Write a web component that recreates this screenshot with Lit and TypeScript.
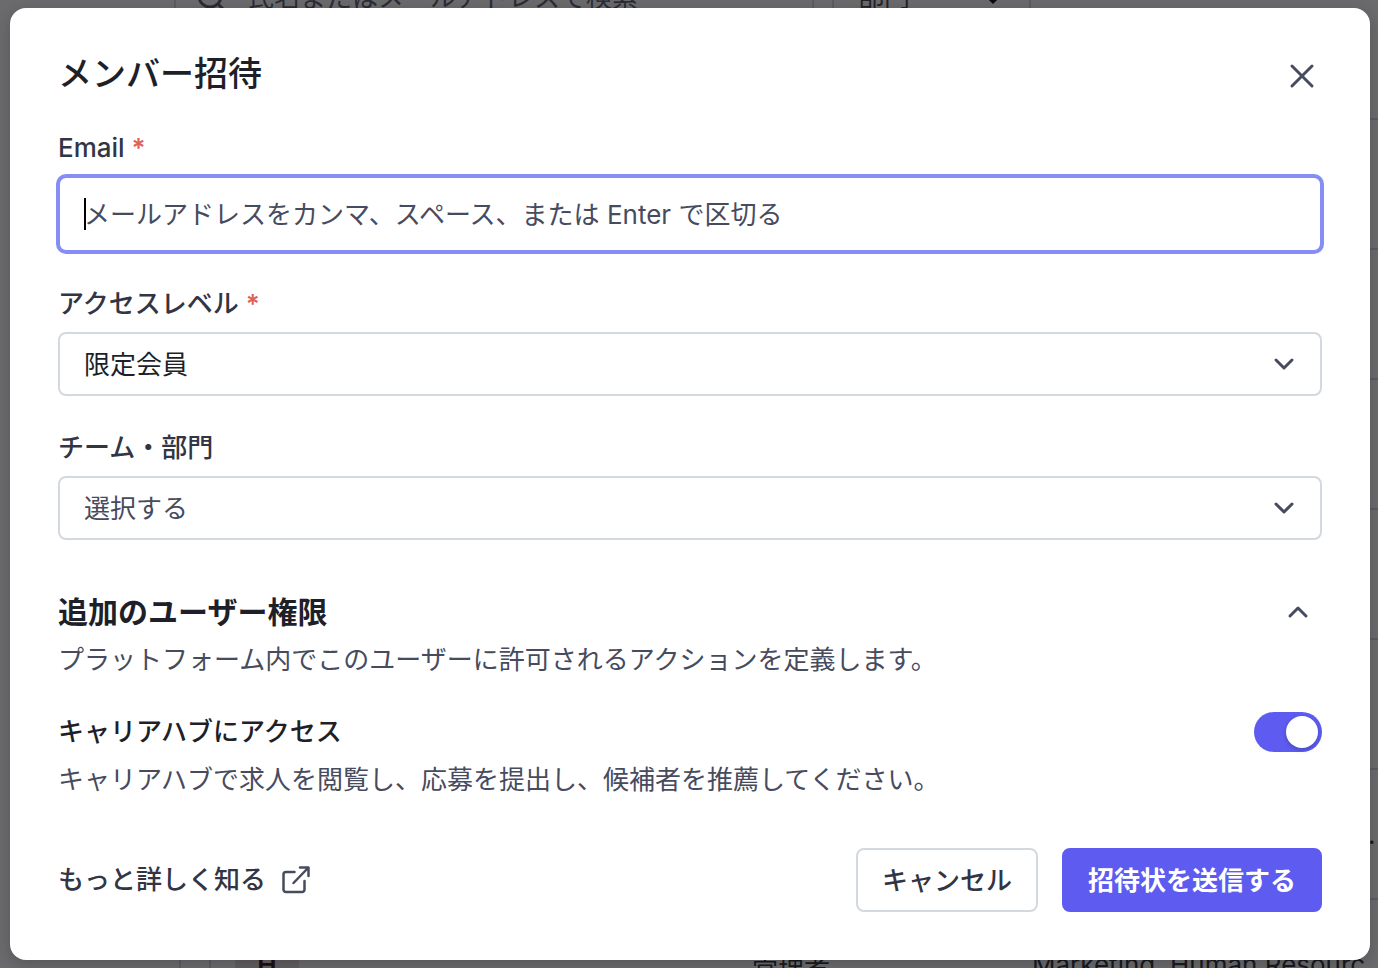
import { LitElement, html, css, svg } from "lit";
import { customElement, state } from "lit/decorators.js";

const chevronDown = svg`<path d="M4 8l8 8 8-8" />`;
const chevronUp = svg`<path d="M4 16l8-8 8 8" />`;

const rows = [
  { initial: "", role: "", department: "", more: "" },
  { initial: "", role: "", department: "", more: "" },
  { initial: "", role: "", department: "", more: "" },
  { initial: "", role: "", department: "", more: "" },
  { initial: "", role: "", department: "", more: "" },
  { initial: "", role: "", department: "", more: "" },
  { initial: "", role: "", department: "", more: "." },
  { initial: "H", role: "管理者", department: "Marketing, Human Resourc", more: "" },
];

@customElement("member-list")
class MemberList extends LitElement {
  static styles = css`
    :host {
      display: block;
      background: #fff;
      color: #5f6376;
    }
    .toolbar {
      display: flex;
      gap: 18px;
      margin-top: -34px;
      padding-left: 174px;
    }
    .box {
      box-sizing: border-box;
      display: flex;
      align-items: center;
      height: 64px;
      border: 2px solid #d9d9ec;
      border-radius: 8px;
      padding: 0 24px 0 20px;
      line-height: 40px;
    }
    .search {
      width: 640px;
      gap: 22px;
    }
    .filter {
      width: 199px;
      padding-left: 24px;
      justify-content: space-between;
      color: #4a4d5c;
    }
    svg {
      fill: none;
      stroke: currentColor;
      stroke-width: 3;
      stroke-linecap: round;
    }
    .chevron {
      color: #111;
    }
    table {
      width: 100%;
      margin-top: -40px;
      padding-left: 179px;
      border-spacing: 0;
      table-layout: fixed;
    }
    td {
      box-sizing: border-box;
      height: 130px;
      padding: 0;
      border-bottom: 2px solid #d9d9ec;
      white-space: nowrap;
      color: #34353f;
    }
    .edge {
      width: 32px;
    }
    tr:last-child .edge {
      border-left: 2px solid #d9d9ec;
      border-right: 2px solid #d9d9ec;
    }
    .person {
      width: 541px;
      padding-left: 24px;
    }
    .role {
      width: 280px;
    }
    .more {
      width: 10px;
    }
    .avatar {
      display: flex;
      align-items: center;
      justify-content: center;
      width: 64px;
      height: 64px;
      border-radius: 8px;
      background: #ecdcde;
      color: #40181e;
      font-weight: 600;
    }
  `;

  render() {
    return html`
      <div class="toolbar">
        <div class="box search">
          <svg width="30" height="30" viewBox="0 0 30 30">
            <circle cx="14" cy="13" r="11" />
            <path d="M22 21l5 5" />
          </svg>
          <span>氏名またはメールアドレスで検索</span>
        </div>
        <div class="box filter">
          <span>部門</span>
          <svg class="chevron" width="24" height="24" viewBox="0 0 24 24">${chevronDown}</svg>
        </div>
      </div>
      <table>
        ${rows.map(
          (row) => html`<tr>
            <td class="edge"></td>
            <td class="person">
              ${row.initial ? html`<div class="avatar">${row.initial}</div>` : ""}
            </td>
            <td class="role">${row.role}</td>
            <td>${row.department}</td>
            <td class="more">${row.more}</td>
          </tr>`
        )}
      </table>
    `;
  }
}

@customElement("invite-dialog")
class InviteDialog extends LitElement {
  @state() private hubAccess = true;

  static styles = css`
    :host {
      display: block;
    }
    .dialog {
      box-sizing: border-box;
      background: #fff;
      border-radius: 16px;
      padding: 40px 48px 48px;
      box-shadow: 0 4px 16px rgba(0, 0, 0, 0.2);
    }
    h2,
    h3,
    p {
      margin: 0;
    }
    button,
    input,
    select {
      box-sizing: border-box;
      margin: 0;
      font: inherit;
    }
    svg {
      display: block;
      fill: none;
      stroke: #474b5e;
      stroke-width: 3;
      stroke-linecap: round;
      stroke-linejoin: round;
    }
    .header,
    .section-header,
    .permission,
    .footer {
      display: flex;
      align-items: center;
      justify-content: space-between;
    }
    .header {
      height: 56px;
      padding-bottom: 24px;
    }
    h2 {
      align-self: flex-start;
      font-size: 34px;
      line-height: 52px;
      font-weight: 500;
      color: #1e1f29;
    }
    .icon-button {
      display: flex;
      align-items: center;
      justify-content: center;
      height: 40px;
      padding: 0;
      border: 0;
      background: none;
      cursor: pointer;
    }
    .close {
      width: 40px;
    }
    .collapse {
      width: 48px;
    }
    .field {
      display: flex;
      flex-direction: column;
      gap: 8px;
      margin-bottom: 32px;
    }
    label,
    .link {
      line-height: 40px;
      font-weight: 500;
      color: #323544;
    }
    .required {
      color: #e0605a;
      font-weight: 600;
    }
    .email {
      width: 100%;
      height: 76px;
      padding: 0 24px;
      border: 2px solid #868ef5;
      border-radius: 8px;
      outline: 0;
      box-shadow: 0 0 0 2px #868ef5;
      color: #1e1f29;
      caret-color: transparent;
      background: linear-gradient(#000, #000) 24px center / 2px 32px no-repeat #fff;
    }
    .email::placeholder {
      color: #474b5e;
      opacity: 1;
    }
    .select {
      display: grid;
      align-items: center;
    }
    .select > * {
      grid-area: 1 / 1;
    }
    .select svg {
      justify-self: end;
      margin-right: 26px;
      pointer-events: none;
    }
    select {
      appearance: none;
      width: 100%;
      height: 64px;
      padding: 0 64px 0 24px;
      border: 2px solid #d3d9de;
      border-radius: 8px;
      background: #fff;
      color: #1e1f29;
    }
    .unset {
      color: #474b5e;
    }
    .section-header {
      margin-top: 48px;
    }
    h3 {
      font-size: 30px;
      line-height: 48px;
      font-weight: 600;
      color: #1e1f29;
    }
    p {
      line-height: 48px;
      color: #474b5e;
    }
    .permission {
      margin-top: 24px;
    }
    .permission label {
      line-height: 48px;
      color: #1e1f29;
    }
    .toggle {
      appearance: none;
      display: flex;
      width: 68px;
      height: 40px;
      padding: 4px;
      border-radius: 20px;
      background: #aeb2c0;
      cursor: pointer;
    }
    .toggle::before {
      content: "";
      width: 32px;
      height: 32px;
      border-radius: 50%;
      background: #fff;
      box-shadow: 0 2px 4px rgba(0, 0, 0, 0.2);
    }
    .toggle:checked {
      justify-content: flex-end;
      background: #5d5bf0;
    }
    .footer {
      margin-top: 44px;
    }
    .link {
      display: flex;
      align-items: center;
      gap: 16px;
      text-decoration: none;
    }
    .actions {
      display: flex;
      gap: 24px;
    }
    .button {
      height: 64px;
      padding: 0 24px 4px;
      border: 2px solid #d3d9de;
      border-radius: 8px;
      background: #fff;
      color: #323544;
      font-weight: 500;
      cursor: pointer;
    }
    .primary {
      border-color: #5d5bf0;
      background: #5d5bf0;
      color: #fff;
      font-weight: 600;
    }
  `;

  render() {
    return html`
      <form class="dialog" role="dialog" aria-labelledby="title" @submit=${(e: Event) => e.preventDefault()}>
        <div class="header">
          <h2 id="title">メンバー招待</h2>
          <button class="icon-button close" type="button" aria-label="閉じる">
            <svg width="28" height="28" viewBox="0 0 28 28"><path d="M4 4l20 20M24 4L4 24" /></svg>
          </button>
        </div>

        <div class="field">
          <label for="email">Email <span class="required">*</span></label>
          <input
            class="email"
            id="email"
            type="text"
            placeholder="メールアドレスをカンマ、スペース、または Enter で区切る"
          />
        </div>

        <div class="field">
          <label for="level">アクセスレベル <span class="required">*</span></label>
          <div class="select">
            <select id="level">
              <option>限定会員</option>
            </select>
            <svg width="24" height="24" viewBox="0 0 24 24">${chevronDown}</svg>
          </div>
        </div>

        <div class="field">
          <label for="team">チーム・部門</label>
          <div class="select">
            <select class="unset" id="team">
              <option>選択する</option>
            </select>
            <svg width="24" height="24" viewBox="0 0 24 24">${chevronDown}</svg>
          </div>
        </div>

        <div class="section-header">
          <h3>追加のユーザー権限</h3>
          <button class="icon-button collapse" type="button" aria-label="折りたたむ">
            <svg width="24" height="24" viewBox="0 0 24 24">${chevronUp}</svg>
          </button>
        </div>
        <p>プラットフォーム内でこのユーザーに許可されるアクションを定義します。</p>

        <div class="permission">
          <label for="hub">キャリアハブにアクセス</label>
          <input
            class="toggle"
            id="hub"
            type="checkbox"
            role="switch"
            .checked=${this.hubAccess}
            @change=${() => (this.hubAccess = !this.hubAccess)}
          />
        </div>
        <p>キャリアハブで求人を閲覧し、応募を提出し、候補者を推薦してください。</p>

        <div class="footer">
          <a class="link" href="#">
            もっと詳しく知る
            <svg width="28" height="28" viewBox="0 0 28 28">
              <path stroke-width="2.500" d="M12.500 6H4a2.500 2.500 0 0 0-2.500 2.500v15A2.500 2.500 0 0 0 4 26h16a2.500 2.500 0 0 0 2.500-2.500V15" />
              <path stroke-width="2.500" d="M11.500 17L26 2M18 1.500h8.500V10" />
            </svg>
          </a>
          <div class="actions">
            <button class="button" type="button">キャンセル</button>
            <button class="button primary" type="submit">招待状を送信する</button>
          </div>
        </div>
      </form>
    `;
  }
}

@customElement("app-root")
class AppRoot extends LitElement {
  static styles = css`
    :host {
      display: block;
      position: relative;
      min-height: 100vh;
      overflow: hidden;
      font-family: Inter, "Noto Sans CJK JP", sans-serif;
      font-size: 26px;
    }
    .behind {
      position: absolute;
      inset: 0;
      overflow: hidden;
    }
    .overlay {
      position: relative;
      box-sizing: border-box;
      min-height: 100vh;
      padding: 8px 8px 8px 10px;
      background: rgba(8, 8, 11, 0.6);
    }
  `;

  render() {
    return html`
      <div class="behind" aria-hidden="true"><member-list></member-list></div>
      <div class="overlay"><invite-dialog></invite-dialog></div>
    `;
  }
}
